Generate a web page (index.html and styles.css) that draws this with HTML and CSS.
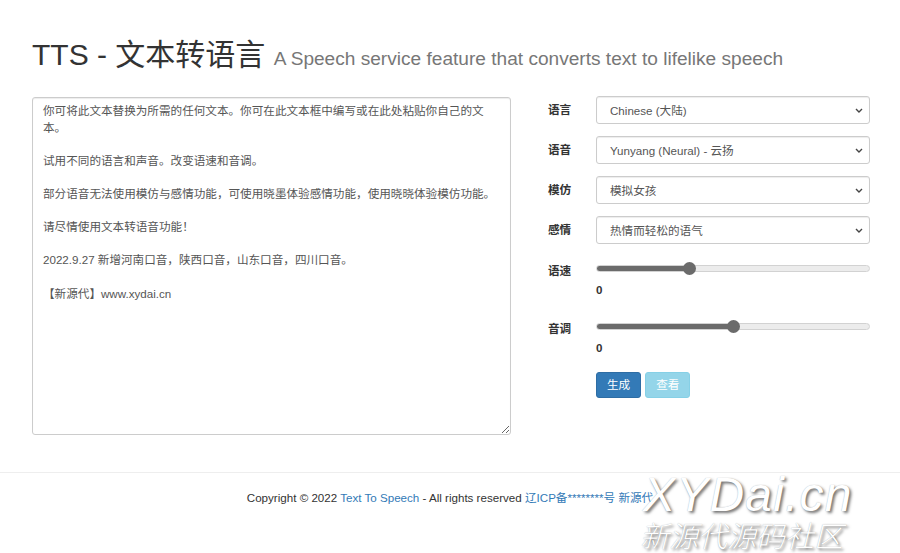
FILE: index.html
```html
<!DOCTYPE html>
<html lang="zh-CN">
<head>
<meta charset="utf-8">
<title>TTS - 文本转语言</title>
<link rel="stylesheet" href="styles.css">
</head>
<body>
<div class="container">
  <h1 class="title">TTS - 文本转语言 <small>A Speech service feature that converts text to lifelike speech</small></h1>
  <div class="main">
    <textarea class="text-input">你可将此文本替换为所需的任何文本。你可在此文本框中编写或在此处粘贴你自己的文本。

试用不同的语言和声音。改变语速和音调。

部分语音无法使用模仿与感情功能，可使用晓墨体验感情功能，使用晓晓体验模仿功能。

请尽情使用文本转语音功能！

2022.9.27 新增河南口音，陕西口音，山东口音，四川口音。

【新源代】www.xydai.cn</textarea>
    <form class="settings">
      <label class="lbl">语言</label>
      <div class="select-wrap">
        <select class="ctl"><option>Chinese (大陆)</option></select>
        <svg class="chev" width="8" height="5" viewBox="0 0 8 5"><path d="M1 1l3 3 3-3" fill="none" stroke="#444" stroke-width="1.4"/></svg>
      </div>

      <label class="lbl">语音</label>
      <div class="select-wrap">
        <select class="ctl"><option>Yunyang (Neural) - 云扬</option></select>
        <svg class="chev" width="8" height="5" viewBox="0 0 8 5"><path d="M1 1l3 3 3-3" fill="none" stroke="#444" stroke-width="1.4"/></svg>
      </div>

      <label class="lbl">模仿</label>
      <div class="select-wrap">
        <select class="ctl"><option>模拟女孩</option></select>
        <svg class="chev" width="8" height="5" viewBox="0 0 8 5"><path d="M1 1l3 3 3-3" fill="none" stroke="#444" stroke-width="1.4"/></svg>
      </div>

      <label class="lbl">感情</label>
      <div class="select-wrap">
        <select class="ctl"><option>热情而轻松的语气</option></select>
        <svg class="chev" width="8" height="5" viewBox="0 0 8 5"><path d="M1 1l3 3 3-3" fill="none" stroke="#444" stroke-width="1.4"/></svg>
      </div>

      <label class="lbl lbl-range">语速</label>
      <div class="range-group">
        <input class="range" type="range" min="-100" max="200" value="0" style="--p:34.3%">
        <div class="range-val">0</div>
      </div>

      <label class="lbl lbl-range">音调</label>
      <div class="range-group">
        <input class="range" type="range" min="-50" max="50" value="0" style="--p:50.4%">
        <div class="range-val">0</div>
      </div>

      <div></div>
      <div class="buttons">
        <button type="button" class="btn btn-primary">生成</button>
        <button type="button" class="btn btn-info" disabled>查看</button>
      </div>
    </form>
  </div>
</div>
<footer class="footer">
  <p>Copyright © 2022 <a href="#">Text To Speech</a> - All rights reserved <a href="#">辽ICP备********号</a> <a href="#">新源代</a></p>
  <div class="watermark">
    <div class="wm-en">XYDai.cn</div>
    <div class="wm-cn">新源代源码社区</div>
  </div>
</footer>
</body>
</html>
```
FILE: styles.css
```css
* { box-sizing: border-box; }
html, body {
  margin: 0;
  padding: 0;
  background: #fff;
}
body {
  font-family: "Liberation Sans", "Noto Sans CJK SC", sans-serif;
  font-size: 11.6px;
  line-height: 16.6px;
  color: #333;
  height: 553px;
  overflow: hidden;
  position: relative;
}
.container {
  width: 838px;
  margin-left: 32px;
}
.title {
  margin: 38px 0 22px;
  font-size: 30px;
  line-height: 33px;
  font-weight: 400;
  color: #333;
}
.title small {
  font-size: 19.1px;
  color: #777;
  font-weight: 400;
}
.main {
  display: grid;
  grid-template-columns: 479px 1fr;
  column-gap: 37px;
  align-items: start;
}
.text-input {
  display: block;
  width: 479px;
  height: 338px;
  margin: 0;
  padding: 5px 10px 4px;
  border: 1px solid #ccc;
  border-radius: 3px;
  box-shadow: inset 0 1px 1px rgba(0,0,0,.075);
  font-family: "Liberation Sans", "Noto Sans CJK SC", sans-serif;
  font-size: 11.6px;
  line-height: 16.6px;
  color: #555;
  resize: both;
}
.settings {
  display: grid;
  grid-template-columns: 48px 274px;
  row-gap: 12px;
  margin: -1px 0 0;
}
.lbl {
  font-weight: 700;
  color: #333;
  align-self: center;
}
.lbl-range {
  align-self: start;
  margin-top: 7px;
}
.select-wrap {
  position: relative;
  height: 28px;
}
.ctl {
  -webkit-appearance: none;
  appearance: none;
  display: block;
  width: 100%;
  height: 28px;
  padding: 0 24px 0 13px;
  border: 1px solid #ccc;
  border-radius: 3px;
  background: #fff;
  box-shadow: inset 0 1px 1px rgba(0,0,0,.075);
  font-family: "Liberation Sans", "Noto Sans CJK SC", sans-serif;
  font-size: 11.6px;
  color: #555;
}
.chev {
  position: absolute;
  right: 7px;
  top: 12px;
  pointer-events: none;
}
.range-group {
  display: flex;
  flex-direction: column;
  padding-top: 1px;
  margin-bottom: 3px;
}
.range {
  -webkit-appearance: none;
  appearance: none;
  display: block;
  width: 274px;
  height: 7px;
  margin: 8px 0 0;
  border: 1px solid #d2d2d2;
  border-radius: 4px;
  background: linear-gradient(to right, #6b6b6b var(--p), #ececec var(--p));
  outline: none;
}
.range::-webkit-slider-thumb {
  -webkit-appearance: none;
  appearance: none;
  width: 13px;
  height: 13px;
  border-radius: 50%;
  background: #6b6b6b;
  border: none;
}
.range-val {
  margin-top: 10px;
  font-weight: 700;
  color: #333;
}
.buttons {
  display: flex;
  gap: 4px;
  margin-top: 1px;
}
.btn {
  height: 26px;
  padding: 0 10px;
  border: 1px solid transparent;
  border-radius: 3px;
  font-family: "Liberation Sans", "Noto Sans CJK SC", sans-serif;
  font-size: 11.6px;
  line-height: 24px;
  color: #fff;
}
.btn-primary {
  background: #337ab7;
  border-color: #2e6da4;
}
.btn-info {
  background: #5bc0de;
  border-color: #46b8da;
  opacity: .65;
}
.footer {
  margin-top: 37px;
  border-top: 1px solid #eee;
  text-align: center;
  padding-top: 17px;
}
.footer p {
  margin: 0;
}
.footer a {
  color: #337ab7;
  text-decoration: none;
}
.watermark {
  position: absolute;
  left: 640px;
  top: 472px;
  color: #fff;
  font-style: italic;
  text-align: left;
  pointer-events: none;
}
.wm-en {
  font-family: "Liberation Sans", sans-serif;
  font-size: 48px;
  line-height: 46px;
  margin-left: 3px;
  letter-spacing: 1.2px;
  text-shadow: 2px 2px 3px rgba(0,0,0,.55), 0 0 1px rgba(0,0,0,.3);
}
.wm-cn {
  font-family: "Noto Sans CJK SC", sans-serif;
  font-size: 29px;
  line-height: 30px;
  font-weight: 300;
  margin-top: 1px;
  text-shadow: 2px 2px 3px rgba(0,0,0,.55), 0 0 1px rgba(0,0,0,.3);
}
```
